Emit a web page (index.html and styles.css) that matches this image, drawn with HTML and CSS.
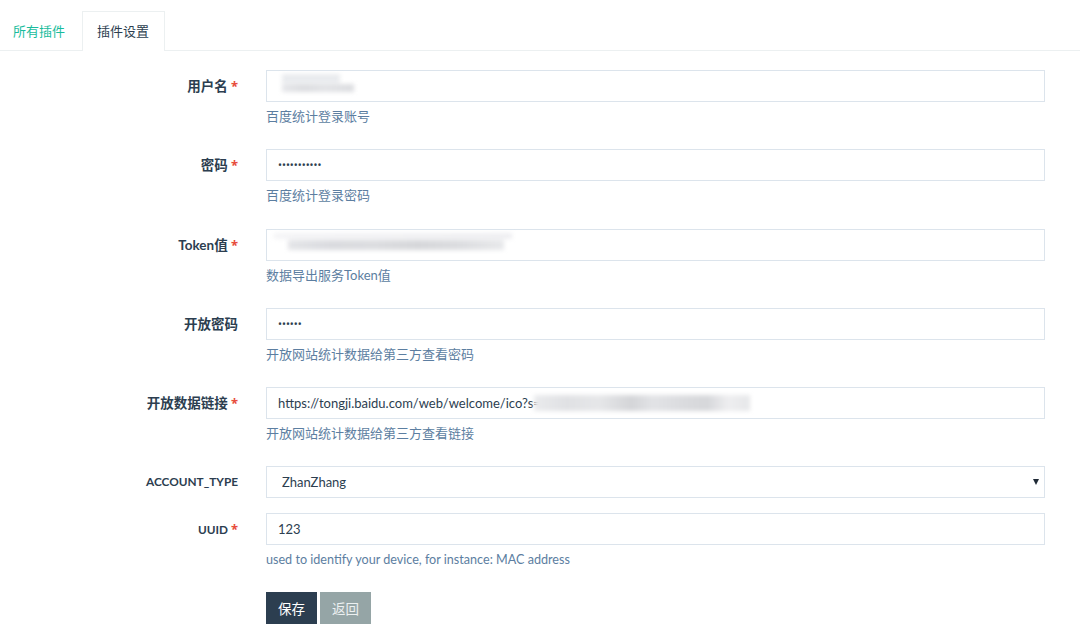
FILE: index.html
```html
<!DOCTYPE html>
<html lang="zh">
<head>
<meta charset="utf-8">
<title>插件设置</title>
<link rel="stylesheet" href="styles.css">
</head>
<body>
<div class="tabs">
  <a class="tab" href="#">所有插件</a>
  <a class="tab active" href="#">插件设置</a>
</div>
<form class="form">
  <div class="row">
    <label class="label">用户名 <span class="req">*</span></label>
    <div class="field">
      <div class="inp-wrap">
        <input class="input" type="text" value="">
        <span class="blur blur-user"></span>
      </div>
      <div class="help">百度统计登录账号</div>
    </div>
  </div>
  <div class="row">
    <label class="label">密码 <span class="req">*</span></label>
    <div class="field">
      <input class="input pwd" type="password" value="12345678901">
      <div class="help">百度统计登录密码</div>
    </div>
  </div>
  <div class="row">
    <label class="label">Token值 <span class="req">*</span></label>
    <div class="field">
      <div class="inp-wrap">
        <input class="input" type="text" value="">
        <span class="blur blur-token"></span>
      </div>
      <div class="help">数据导出服务Token值</div>
    </div>
  </div>
  <div class="row">
    <label class="label">开放密码</label>
    <div class="field">
      <input class="input pwd" type="password" value="123456">
      <div class="help">开放网站统计数据给第三方查看密码</div>
    </div>
  </div>
  <div class="row">
    <label class="label">开放数据链接 <span class="req">*</span></label>
    <div class="field">
      <div class="inp-wrap">
        <input class="input" type="text" value="https://tongji.baidu.com/web/welcome/ico?s=">
        <span class="blur blur-url"></span>
      </div>
      <div class="help">开放网站统计数据给第三方查看链接</div>
    </div>
  </div>
  <div class="row">
    <label class="label small">ACCOUNT_TYPE</label>
    <div class="field">
      <div class="sel-wrap">
        <select class="input select">
          <option>ZhanZhang</option>
        </select>
      </div>
    </div>
  </div>
  <div class="row">
    <label class="label small">UUID <span class="req">*</span></label>
    <div class="field">
      <input class="input" type="text" value="123">
      <div class="help help-en">used to identify your device, for instance: MAC address</div>
    </div>
  </div>
  <div class="row">
    <div></div>
    <div class="field buttons">
      <button type="button" class="btn btn-primary">保存</button>
      <button type="button" class="btn btn-default">返回</button>
    </div>
  </div>
</form>
</body>
</html>
```

FILE: styles.css
```css
html, body {
  margin: 0;
  padding: 0;
  background: #ffffff;
}
body {
  font-family: "Lato", "Noto Sans CJK SC", sans-serif;
  font-size: 13px;
  color: #2c3e50;
}
.tabs {
  display: flex;
  margin-top: 11px;
  border-bottom: 1px solid #ecf0f1;
  height: 39px;
}
.tab {
  display: block;
  padding: 0 14px 0 12px;
  line-height: 39px;
  height: 39px;
  font-size: 13px;
  color: #18bc9c;
  text-decoration: none;
  border: 1px solid transparent;
  border-bottom: none;
  box-sizing: border-box;
  margin-right: 2px;
}
.tab.active {
  color: #2c3e50;
  background: #fff;
  border-color: #ecf0f1;
  height: 40px;
  padding: 0 14px;
  width: 83px;
  margin-right: 0;
}
.form {
  padding-top: 19px;
}
.row {
  display: grid;
  grid-template-columns: 238px 779px;
  column-gap: 28px;
  margin-bottom: 15px;
}
.label {
  text-align: right;
  font-weight: 700;
  font-size: 13.5px;
  line-height: 32px;
  color: #2c3e50;
  white-space: nowrap;
}
.label.small {
  font-size: 11.8px;
}
.req {
  color: #e74c3c;
  font-family: "Noto Sans", sans-serif;
  font-size: 13px;
}
.field {
  display: flex;
  flex-direction: column;
}
.inp-wrap, .sel-wrap {
  position: relative;
}
.input {
  display: block;
  box-sizing: border-box;
  width: 100%;
  height: 32px;
  border: 1px solid #dce4ec;
  border-radius: 0;
  padding: 0 11px;
  font-family: "Lato", "Noto Sans CJK SC", sans-serif;
  font-size: 13px;
  color: #2c3e50;
  background: #fff;
  outline: none;
}
.pwd {
  font-family: "Noto Sans", sans-serif;
  font-size: 10.5px;
}
.select {
  -webkit-appearance: none;
  appearance: none;
  padding-left: 15px;
}
.sel-wrap::after {
  content: "";
  position: absolute;
  right: 6px;
  top: 13px;
  border-left: 3px solid transparent;
  border-right: 3px solid transparent;
  border-top: 6px solid #1f2a36;
}
.help {
  margin-top: 5px;
  line-height: 18px;
  font-size: 13px;
  color: #5c7ea1;
  margin-bottom: 9.25px;
}
.help-en {
  font-size: 12.6px;
  margin-top: 6px;
  margin-bottom: 8.25px;
}
.blur {
  position: absolute;
  filter: blur(2px);
}
.blur-user {
  left: 16px;
  top: 4px;
  width: 72px;
  height: 18px;
  background:
    linear-gradient(#e9ebee, #e9ebee) 0 0 / 58px 9px no-repeat,
    linear-gradient(90deg, #e6e7ea 0, #dcdde0 30%, #e2e3e6 60%, #dcdde0 100%) 0 10px / 72px 8px no-repeat;
}
.blur-token {
  left: 8px;
  top: 4px;
  width: 238px;
  height: 18px;
  background:
    linear-gradient(90deg, #f4f4f6 0, #eeeef1 100%) 0 0 / 238px 6px no-repeat,
    linear-gradient(90deg, #e4e5e8 0, #dadbdf 20%, #dcdde0 40%, #d6d7da 60%, #dcdde0 80%, #e8e9eb 100%) 14px 7px / 216px 10px no-repeat;
}
.blur-url {
  left: 268px;
  top: 8px;
  width: 216px;
  height: 16px;
  background: linear-gradient(90deg, #eaebed 0, #e0e1e4 15%, #e6e7e9 30%, #d4d5d8 45%, #e2e3e6 55%, #dadbde 70%, #d6d7da 80%, #eeeef0 90%, #e6e7e9 100%);
}
.buttons {
  flex-direction: row;
  gap: 3px;
  margin-top: -1px;
}
.btn {
  height: 32px;
  padding: 0;
  border: none;
  border-radius: 0;
  font-family: "Lato", "Noto Sans CJK SC", sans-serif;
  font-size: 13.5px;
  color: #fff;
  cursor: pointer;
  width: 51px;
}
.btn-primary {
  background: #2c3e50;
}
.btn-default {
  background: #95a5a6;
  color: #ecf0f1;
}
```
